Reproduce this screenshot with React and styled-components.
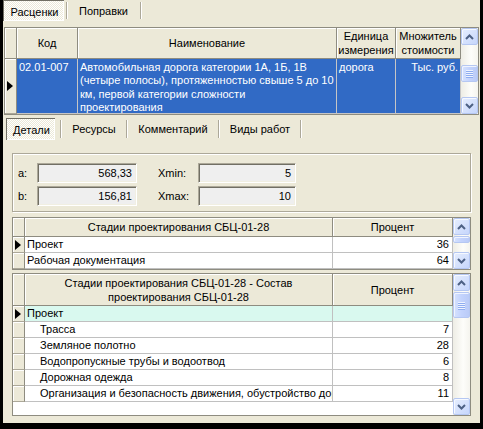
import React from 'react';
import styled, { createGlobalStyle, css } from 'styled-components';

const Global = createGlobalStyle`
  html, body { margin: 0; padding: 0; background: #000; }
  body { font-family: "Liberation Sans", Arial, sans-serif; font-size: 11px; color: #000; }
  * { box-sizing: border-box; }
`;

const Window = styled.div`
  margin-left: 3px;
  width: 477px;
  height: 423px;
  background: #ece9d8;
  display: flex;
  flex-direction: column;
  overflow: hidden;
`;

const TabBar = styled.div`
  display: flex;
  align-items: stretch;
  height: ${p => p.$h}px;
  margin-top: ${p => p.$mt || 0}px;
  padding-left: ${p => p.$pl || 0}px;
  flex-shrink: 0;
`;

const checker = css`
  background-color: #fff;
  background-image: conic-gradient(#ece9d8 25%, #fff 0 50%, #ece9d8 0 75%, #fff 0);
  background-size: 2px 2px;
`;

const Tab = styled.div`
  width: ${p => p.$w}px;
  display: flex;
  align-items: center;
  justify-content: center;
  white-space: nowrap;
  ${p => p.$pressed && css`
    ${checker}
    box-shadow: inset 1px 1px 0 #716f64, inset -1px -1px 0 #fff;
    padding-top: 2px;
    padding-left: 2px;
  `}
`;

const Sep = styled.div`
  width: 2px;
  margin: 2px 0 2px ${p => p.$ml || 0}px;
  box-shadow: inset 1px 0 0 #aca899, inset -1px 0 0 #fff;
`;

const Frame = styled.div`
  display: flex;
  margin-top: ${p => p.$mt}px;
  margin-left: ${p => p.$ml}px;
  width: ${p => p.$w}px;
  height: ${p => p.$h}px;
  border: 1px solid #8e8c80;
  background: #fff;
  flex-shrink: 0;
`;

const Table = styled.div`
  flex: 1;
  display: grid;
  grid-template-columns: ${p => p.$cols};
  grid-template-rows: ${p => p.$rows};
  align-content: start;
  background: #fff;
  overflow: hidden;
`;

const HeadCell = styled.div`
  background: #ece9d8;
  box-shadow: inset 1px 1px 0 #fff;
  border-right: 1px solid #8e8c80;
  border-bottom: 1px solid #8e8c80;
  display: flex;
  align-items: center;
  justify-content: center;
  text-align: center;
  line-height: 14px;
  white-space: nowrap;
  overflow: hidden;
`;

const IndCell = styled.div`
  background: #ece9d8;
  box-shadow: inset 1px 1px 0 #fff;
  border-right: 1px solid #8e8c80;
  border-bottom: 1px solid #aca899;
  display: flex;
  align-items: center;
  justify-content: center;
  padding-right: 1px;
`;

const Arrow = styled.span`
  width: 0;
  height: 0;
  border-top: 5px solid transparent;
  border-bottom: 5px solid transparent;
  border-left: 6px solid #000;
`;

const Cell = styled.div`
  background: ${p => p.$bg || '#fff'};
  color: ${p => p.$color || '#000'};
  border-right: 1px solid ${p => p.$line || '#c0c0c0'};
  border-bottom: 1px solid ${p => p.$line || '#c0c0c0'};
  text-align: ${p => p.$align || 'left'};
  padding: ${p => p.$wrap ? '2px 2px 0 2px' : `0 3px 0 ${p.$pl ?? 2}px`};
  line-height: ${p => p.$wrap ? '13.4px' : '15px'};
  white-space: ${p => p.$wrap ? 'normal' : 'nowrap'};
  overflow: hidden;
`;

const Scroll = styled.div`
  width: 17px;
  display: flex;
  flex-direction: column;
  flex-shrink: 0;
  background: linear-gradient(to right, #eeede5, #fdfdfa 60%, #f5f4ee);
`;

const SBtn = styled.div`
  height: 17px;
  flex-shrink: 0;
  border: 1px solid #b5c7f2;
  border-radius: 2px;
  background: linear-gradient(135deg, #e6eefe, #c6d6fc);
  box-shadow: inset 1px 1px 0 #f6f9ff;
  display: flex;
  align-items: center;
  justify-content: center;
`;

const Track = styled.div`
  flex: 1;
  padding-top: ${p => p.$top}px;
  display: flex;
  flex-direction: column;
`;

const Thumb = styled.div`
  height: ${p => p.$h}px;
  border: 1px solid #b5c7f2;
  border-radius: 2px;
  background: linear-gradient(to right, #d6e2fd, #c3d3fd 50%, #bacbf7);
  box-shadow: inset 1px 1px 0 #f0f4ff;
  display: flex;
  flex-direction: column;
  align-items: center;
  justify-content: center;
  gap: 1px;
`;

const Grip = styled.div`
  width: 7px;
  height: 1px;
  background: #eef3ff;
  box-shadow: 0 1px 0 #8fadf0;
`;

const Chevron = ({ up }) => (
  <svg width="9" height="6" viewBox="0 0 9 6">
    <polyline
      points={up ? '1,5 4.5,1.5 8,5' : '1,1 4.5,4.5 8,1'}
      fill="none"
      stroke="#4d6185"
      strokeWidth="2"
    />
  </svg>
);

const ScrollBar = ({ top, h, grips }) => (
  <Scroll>
    <SBtn><Chevron up /></SBtn>
    <Track $top={top}>
      <Thumb $h={h}>
        {grips && [0, 1, 2, 3].map(i => <Grip key={i} />)}
      </Thumb>
    </Track>
    <SBtn><Chevron /></SBtn>
  </Scroll>
);

const Panel = styled.div`
  margin: 13px 0 0 9px;
  width: 459px;
  height: 59px;
  border: 1px solid #aca899;
  box-shadow: inset 1px 1px 0 #fff, 1px 1px 0 #fff;
  padding: 9px 0 0 5px;
  display: grid;
  grid-template-columns: 19px 100px 21px 40px 98px;
  grid-template-rows: 20px 20px;
  row-gap: 3px;
  align-items: center;
  flex-shrink: 0;
`;

const Label = styled.span`
  line-height: 20px;
`;

const Edit = styled.div`
  grid-column: ${p => p.$col};
  height: 20px;
  background: #efefef;
  border-top: 1px solid #aca899;
  border-left: 1px solid #aca899;
  border-right: 1px solid #fff;
  border-bottom: 1px solid #fff;
  box-shadow: inset 1px 1px 0 #716f64, inset -1px -1px 0 #f1efe2;
  text-align: right;
  padding-right: 4px;
  line-height: 18px;
`;

const rows3 = [
  ['Трасса', '7'],
  ['Земляное полотно', '28'],
  ['Водопропускные трубы и водоотвод', '6'],
  ['Дорожная одежда', '8'],
  ['Организация и безопасность движения, обустройство дорог', '11'],
];

export default function App() {
  const blue = '#316ac5';
  const bl = '#c6c6c6';
  return (
    <>
      <Global />
      <Window>
        <TabBar $h={21}>
          <Tab $w={61} $pressed>Расценки</Tab>
          <Sep $ml={2} />
          <Tab $w={71}>Поправки</Tab>
          <Sep $ml={1} />
        </TabBar>

        <Frame $mt={6} $ml={1} $w={475} $h={88}>
          <Table $cols="12px 61px 259px 59px 65px" $rows="31px 55px">
            <HeadCell />
            <HeadCell>Код</HeadCell>
            <HeadCell>Наименование</HeadCell>
            <HeadCell>Единица<br />измерения</HeadCell>
            <HeadCell>Множитель<br />стоимости</HeadCell>
            <IndCell><Arrow /></IndCell>
            <Cell $bg={blue} $color="#fff" $line={bl} $wrap>02.01-007</Cell>
            <Cell $bg={blue} $color="#fff" $line={bl} $wrap>
              Автомобильная дорога категории 1А, 1Б, 1В (четыре полосы), протяженностью свыше 5 до 10 км, первой категории сложности<br />проектирования
            </Cell>
            <Cell $bg={blue} $color="#fff" $line={bl} $wrap>дорога</Cell>
            <Cell $bg={blue} $color="#fff" $line={bl} $wrap $align="right">Тыс. руб.</Cell>
          </Table>
          <ScrollBar top={20} h={17} grips />
        </Frame>

        <TabBar $h={22} $mt={3} $pl={3}>
          <Tab $w={49} $pressed>Детали</Tab>
          <Sep $ml={5} />
          <Tab $w={64}>Ресурсы</Tab>
          <Sep />
          <Tab $w={90}>Комментарий</Tab>
          <Sep />
          <Tab $w={80}>Виды работ</Tab>
          <Sep />
        </TabBar>

        <Panel>
          <Label>a:</Label>
          <Edit $col="2">568,33</Edit>
          <span />
          <Label>Xmin:</Label>
          <Edit $col="5">5</Edit>
          <Label>b:</Label>
          <Edit $col="2">156,81</Edit>
          <span />
          <Label>Xmax:</Label>
          <Edit $col="5">10</Edit>
        </Panel>

        <Frame $mt={5} $ml={9} $w={459} $h={53}>
          <Table $cols="12px 308px 120px" $rows="19px 16px 16px">
            <HeadCell />
            <HeadCell>Стадии проектирования СБЦ-01-28</HeadCell>
            <HeadCell>Процент</HeadCell>
            <IndCell><Arrow /></IndCell>
            <Cell>Проект</Cell>
            <Cell $align="right">36</Cell>
            <IndCell />
            <Cell>Рабочая документация</Cell>
            <Cell $align="right">64</Cell>
          </Table>
          <ScrollBar top={1} h={7} />
        </Frame>

        <Frame $mt={3} $ml={9} $w={459} $h={143}>
          <Table $cols="12px 308px 120px" $rows="32px repeat(6, 16px)">
            <HeadCell />
            <HeadCell>Стадии проектирования СБЦ-01-28 - Состав<br />проектирования СБЦ-01-28</HeadCell>
            <HeadCell>Процент</HeadCell>
            <IndCell><Arrow /></IndCell>
            <Cell $bg="#d9f9ef">Проект</Cell>
            <Cell $bg="#d9f9ef" $align="right"></Cell>
            {rows3.map(([n, v]) => (
              <React.Fragment key={n}>
                <IndCell />
                <Cell $pl={15}>{n}</Cell>
                <Cell $align="right">{v}</Cell>
              </React.Fragment>
            ))}
          </Table>
          <ScrollBar top={1} h={26} grips />
        </Frame>
      </Window>
    </>
  );
}
